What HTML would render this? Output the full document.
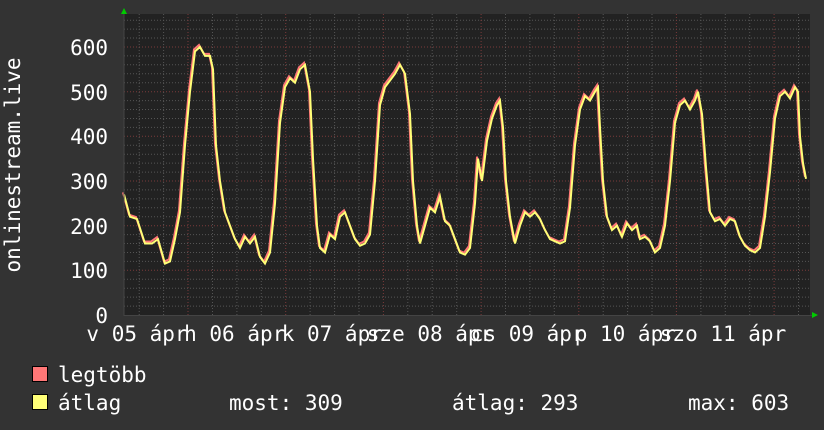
<!DOCTYPE html>
<html><head><meta charset="utf-8"><style>
html,body{margin:0;padding:0;background:#333;}
svg{display:block}
text{font-family:"DejaVu Sans Mono","Liberation Mono",monospace;fill:#fff;font-size:21px}
</style></head><body>
<svg id="g" width="824" height="430" xmlns="http://www.w3.org/2000/svg">
<rect width="824" height="430" fill="#333"/>
<rect x="124" y="14" width="686" height="302" fill="#222"/>
<g id="grid"></g>
<polyline id="red" fill="none" stroke="#ff7777" stroke-width="2"/>
<polyline id="yel" fill="none" stroke="#ffff77" stroke-width="2"/>
<line x1="124" y1="14" x2="124" y2="316" stroke="#444" stroke-width="1"/>
<line x1="124" y1="315.5" x2="812" y2="315.5" stroke="#444"/>
<polygon points="121,14 124,8 127,14" fill="#0c0"/>
<polygon points="812,312 818,315 812,318" fill="#0c0"/>
<g text-anchor="end">
<text x="108" y="55">600</text><text x="108" y="100">500</text><text x="108" y="144">400</text>
<text x="108" y="189">300</text><text x="108" y="234">200</text><text x="108" y="278">100</text>
<text x="108" y="323">0</text></g>
<g text-anchor="middle">
<text x="137" y="341">v 05 ápr</text><text x="234.7" y="341">h 06 ápr</text>
<text x="332.3" y="341">k 07 ápr</text><text x="430" y="341">sze 08 ápr</text>
<text x="527.7" y="341">cs 09 ápr</text><text x="625.3" y="341">p 10 ápr</text>
<text x="723" y="341">szo 11 ápr</text></g>
<text transform="translate(20,165) rotate(-90)" text-anchor="middle">onlinestream.live</text>
<rect x="32.5" y="366.5" width="15" height="15" fill="#ff7777" stroke="#000"/>
<rect x="32.5" y="394.5" width="15" height="15" fill="#ffff77" stroke="#000"/>
<text x="58" y="382">legtöbb</text>
<text x="58" y="410">átlag</text>
<text x="229" y="410">most: 309</text>
<text x="452" y="410">átlag: 293</text>
<text x="688" y="410">max: 603</text>
</svg>
<script>
var g=document.getElementById("grid"),s="";
function Y(v){return 315-v*0.4467;}
for(var v=20;v<=660;v+=20){var y=Y(v).toFixed(1);var maj=v%100==0;
s+='<line x1="124" x2="810" y1="'+y+'" y2="'+y+'" stroke="'+(maj?'#7a3a3a':'#555')+'" stroke-dasharray="1,2"/>';}
for(var i=0;i<29;i++){var x=(139.2+i*24.42).toFixed(1);if(x>810)break;var maj=(i%4==2);
s+='<line y1="14" y2="316" x1="'+x+'" x2="'+x+'" stroke="'+(maj?'#7a3a3a':'#555')+'" stroke-dasharray="1,2"/>';}
g.innerHTML=s;
var d=[124,270,130,220,137,215,145,160,152,160,158,170,165,115,170,120,175,170,180,230,185,380,190,500,195,590,200,600,205,580,210,580,213,550,216,380,220,300,225,230,230,200,235,170,240,150,245,175,250,160,255,175,260,130,265,115,270,140,275,250,280,430,285,510,290,530,295,520,300,550,305,560,310,500,313,350,317,200,320,150,325,140,330,180,335,170,340,220,345,230,350,200,355,170,360,155,365,160,370,180,375,300,380,470,385,510,390,525,395,540,400,560,405,540,410,450,413,300,417,200,420,160,425,200,430,240,435,230,440,265,445,210,450,200,455,170,460,140,465,135,470,150,475,250,478,350,482,300,487,390,492,440,497,470,500,480,503,420,506,300,510,220,515,160,520,200,525,230,530,220,535,230,540,215,545,190,550,170,555,165,560,160,565,165,570,240,575,380,580,460,585,490,590,480,595,500,598,510,600,420,603,300,607,220,612,190,617,200,622,175,627,205,632,190,637,200,640,170,645,175,650,165,655,140,660,150,665,200,670,300,675,430,680,470,685,480,690,460,695,480,698,500,702,450,706,330,710,230,715,210,720,215,725,200,730,215,735,210,740,175,745,155,750,145,755,140,760,150,765,220,770,320,775,440,780,490,785,500,790,485,795,510,798,500,800,400,803,340,806,305];
var a="",b="";for(var i=0;i<d.length;i+=2){a+=d[i]+","+Y(d[i+1]).toFixed(1)+" ";b+=(d[i]-1)+","+(Y(d[i+1])-2).toFixed(1)+" ";}
document.getElementById("yel").setAttribute("points",a);
document.getElementById("red").setAttribute("points",b);
</script>
</body></html>
